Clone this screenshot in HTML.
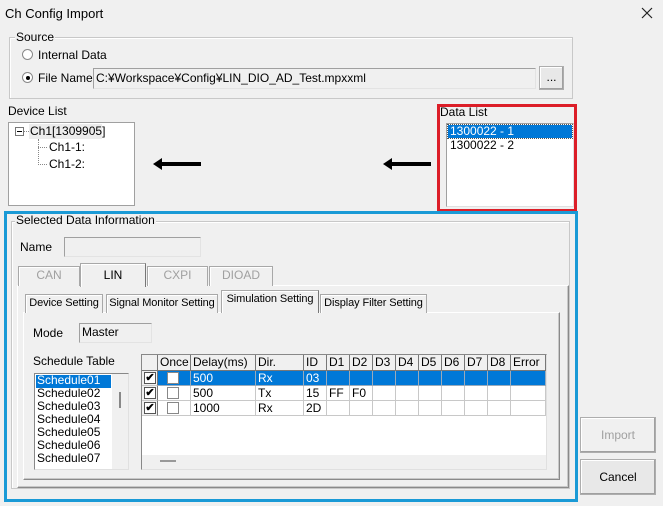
<!DOCTYPE html>
<html><head><meta charset="utf-8"><style>
*{box-sizing:border-box;margin:0;padding:0}
body{width:663px;height:506px;background:#f0f0f0;font-family:"Liberation Sans",sans-serif;font-size:12px;color:#000;position:relative;overflow:hidden}
.a{position:absolute;white-space:nowrap}
.grp{position:absolute;border:1px solid #c8c8c8;box-shadow:inset 1px 1px 0 #fff}
.lg{position:absolute;background:#f0f0f0;padding:0 1px;line-height:13px}
.fld{position:absolute;border:1px solid #a0a0a0;border-right-color:#e3e3e3;border-bottom-color:#e3e3e3;background:#f0f0f0;padding-left:2px;line-height:17px;white-space:nowrap}
.btn{position:absolute;border:1px solid #adadad;background:#e8e8e8;text-align:center;box-shadow:inset -1px -1px 0 #a0a0a0,inset 1px 1px 0 #fff}
.tab{position:absolute;border:1px solid #a8a8a8;border-bottom:none;background:#f0f0f0;text-align:center;line-height:17px;box-shadow:inset 1px 1px 0 #fff;white-space:nowrap;overflow:hidden}
.t2{font-size:11px;letter-spacing:-0.1px}
.pan{position:absolute;border:1px solid #fff;border-right-color:#8a8a8a;border-bottom-color:#8a8a8a;box-shadow:inset -1px -1px 0 #c8c8c8}
.cell{position:absolute;border-right:1px solid #c8c8c8;border-bottom:1px solid #c8c8c8;padding-left:2px;line-height:14px;white-space:nowrap}
.cb{position:absolute;width:12px;height:12px;border:1px solid #555;background:#fff;font-size:11px;line-height:10px;text-align:center;font-weight:bold}
.cb2{position:absolute;width:12px;height:12px;border:1px solid #888;background:#fff}
</style></head><body>
<div class="a" style="left:5px;top:6px;font-size:13px">Ch Config Import</div>
<svg class="a" style="left:641px;top:7px" width="12" height="12"><path d="M1 1L11 11M11 1L1 11" stroke="#222" stroke-width="1.2"/></svg>

<div class="grp" style="left:9px;top:37px;width:564px;height:62px"></div>
<div class="lg a" style="left:15px;top:31px">Source</div>
<div class="a" style="left:22px;top:49px;width:11px;height:11px;border-radius:50%;border:1px solid #888;background:#fff"></div>
<div class="a" style="left:38px;top:48px">Internal Data</div>
<div class="a" style="left:22px;top:72px;width:11px;height:11px;border-radius:50%;border:1px solid #888;background:#fff"></div>
<div class="a" style="left:25.5px;top:75.5px;width:4px;height:4px;border-radius:50%;background:#000"></div>
<div class="a" style="left:38px;top:71px">File Name</div>
<div class="fld" style="left:93px;top:68px;width:443px;height:21px;line-height:19px">C:¥Workspace¥Config¥LIN_DIO_AD_Test.mpxxml</div>
<div class="btn" style="left:539px;top:66px;width:25px;height:24px;line-height:20px">...</div>

<div class="a" style="left:8px;top:104px">Device List</div>
<div class="a" style="left:8px;top:122px;width:127px;height:84px;background:#fff;border:1px solid #a0a0a0"></div>
<div class="a" style="left:15px;top:127px;width:9px;height:9px;border:1px solid #777;background:#fff"></div>
<div class="a" style="left:17px;top:131px;width:5px;height:1px;background:#000"></div>
<div class="a" style="left:24px;top:131px;width:5px;border-top:1px dotted #888"></div>
<div class="a" style="left:29px;top:124px;width:73px;height:15px;background:#ececec"></div>
<div class="a" style="left:30px;top:124px;line-height:15px">Ch1[1309905]</div>
<div class="a" style="left:38px;top:139px;height:26px;border-left:1px dotted #888"></div>
<div class="a" style="left:38px;top:147px;width:9px;border-top:1px dotted #888"></div>
<div class="a" style="left:38px;top:164px;width:9px;border-top:1px dotted #888"></div>
<div class="a" style="left:49px;top:140px">Ch1-1:</div>
<div class="a" style="left:49px;top:157px">Ch1-2:</div>

<svg class="a" style="left:150px;top:157px" width="55" height="14"><rect x="9" y="5" width="42" height="4" fill="#000"/><polygon points="3,7 12,1 12,13" fill="#000"/></svg>
<svg class="a" style="left:380px;top:157px" width="55" height="14"><rect x="9" y="5" width="42" height="4" fill="#000"/><polygon points="3,7 12,1 12,13" fill="#000"/></svg>

<div class="a" style="left:437px;top:104px;width:140px;height:108px;border:3px solid #dc1e28"></div>
<div class="a" style="left:440px;top:105px">Data List</div>
<div class="a" style="left:446px;top:123px;width:128px;height:84px;background:#fff;border:1px solid #a0a0a0;border-right-color:#e0e0e0;border-bottom-color:#e0e0e0"></div>
<div class="a" style="left:448px;top:125px;width:124px;height:13px;background:#0078d7;outline:1px dotted #555"></div>
<div class="a" style="left:450px;top:124px;line-height:14px;color:#fff">1300022 - 1</div>
<div class="a" style="left:450px;top:138px;line-height:14px">1300022 - 2</div>

<div class="a" style="left:4px;top:211px;width:574px;height:291px;border:3px solid #1a9ad6"></div>
<div class="grp" style="left:11px;top:221px;width:559px;height:268px"></div>
<div class="lg a" style="left:15px;top:214px">Selected Data Information</div>
<div class="a" style="left:20px;top:240px">Name</div>
<div class="fld" style="left:64px;top:237px;width:137px;height:20px"></div>

<div class="pan" style="left:17px;top:285px;width:552px;height:203px"></div>
<div class="tab" style="left:18px;top:266px;width:62px;height:20px;color:#a0a0a0">CAN</div>
<div class="tab" style="left:147px;top:266px;width:61px;height:20px;color:#a0a0a0">CXPI</div>
<div class="tab" style="left:209px;top:266px;width:64px;height:20px;color:#a0a0a0">DIOAD</div>
<div class="tab" style="left:80px;top:263px;width:66px;height:24px;line-height:22px;border-right-color:#777">LIN</div>

<div class="pan" style="left:23px;top:312px;width:537px;height:168px"></div>
<div class="tab t2" style="left:25px;top:294px;width:78px;height:19px">Device Setting</div>
<div class="tab t2" style="left:106px;top:294px;width:112px;height:19px">Signal Monitor Setting</div>
<div class="tab t2" style="left:320px;top:294px;width:107px;height:19px">Display Filter Setting</div>
<div class="tab t2" style="left:221px;top:290px;width:98px;height:23px;border-right-color:#777">Simulation Setting</div>

<div class="a" style="left:33px;top:326px">Mode</div>
<div class="fld" style="left:79px;top:323px;width:73px;height:20px">Master</div>
<div class="a" style="left:33px;top:354px">Schedule Table</div>
<div class="a" style="left:34px;top:373px;width:95px;height:97px;background:#fff;border:1px solid #888;border-right-color:#e0e0e0;border-bottom-color:#e0e0e0;overflow:hidden"></div>
<div class="a" style="left:36px;top:375px;width:75px;height:13px;background:#0078d7"></div>
<div class="a" style="left:37px;top:374px;line-height:13px;font-size:12px">
<div style="color:#fff">Schedule01</div><div>Schedule02</div><div>Schedule03</div><div>Schedule04</div><div>Schedule05</div><div>Schedule06</div><div>Schedule07</div></div>
<div class="a" style="left:112px;top:374px;width:16px;height:95px;background:#f0f0f0"></div>
<div class="a" style="left:119px;top:392px;width:2px;height:16px;background:#888"></div>

<div class="a" style="left:141px;top:354px;width:406px;height:116px;background:#f0f0f0;border:1px solid #888;border-right-color:#e0e0e0;border-bottom-color:#e0e0e0"></div>
<div class="a" style="left:142px;top:370px;width:404px;height:85px;background:#fff"></div>
<div class="a" style="left:142px;top:370px;width:404px;height:15px;background:#0078d7"></div>
<div class="a" style="left:160px;top:460px;width:16px;height:2px;background:#999"></div>
<div id="g"></div>
<script>
var xs=[142,158,191,256,304,327,350,373,396,419,442,465,488,511,546];
var hd=["","Once","Delay(ms)","Dir.","ID","D1","D2","D3","D4","D5","D6","D7","D8","Error"];
var rows=[["","","500","Rx","03"],["","","500","Tx","15","FF","F0"],["","","1000","Rx","2D"]];
var h="";
for(var i=0;i<14;i++){h+='<div class="cell" style="left:'+xs[i]+'px;top:355px;width:'+(xs[i+1]-xs[i])+'px;height:16px;border-right-color:#777;border-bottom-color:#777;background:#f0f0f0;line-height:15px">'+hd[i]+'</div>';}
for(var r=0;r<3;r++){var y=371+r*15;for(var i=0;i<14;i++){var t=rows[r][i]||"";h+='<div class="cell" style="left:'+xs[i]+'px;top:'+y+'px;width:'+(xs[i+1]-xs[i])+'px;height:15px;'+(r==0&&i>0?'color:#fff;border-color:#9ab;':'')+(i==0?'border-right-color:#777;background:#f0f0f0;':'')+'">'+t+'</div>';}
h+='<div class="cb" style="left:144px;top:'+(y+1)+'px">✔</div><div class="cb2" style="left:167px;top:'+(y+1)+'px"></div>';}
document.getElementById("g").innerHTML=h;
</script>

<div class="btn" style="left:580px;top:417px;width:76px;height:36px;line-height:34px;color:#a0a0a0;background:#f0f0f0">Import</div>
<div class="btn" style="left:580px;top:459px;width:76px;height:36px;line-height:34px">Cancel</div>
</body></html>
